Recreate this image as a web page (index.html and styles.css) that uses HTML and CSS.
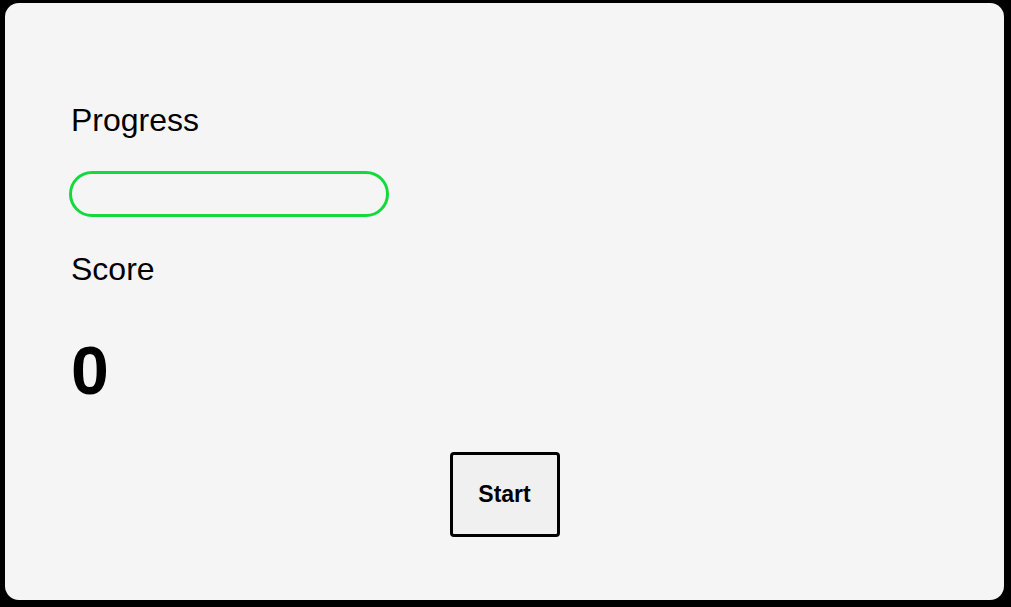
FILE: index.html
```html
<!DOCTYPE html>
<html lang="en">
<head>
<meta charset="utf-8">
<title>Progress</title>
<link rel="stylesheet" href="styles.css">
</head>
<body>
  <main class="card">
    <div class="label label-progress">Progress</div>
    <div class="bar"><div class="bar-fill" style="width:0%"></div></div>
    <div class="label label-score">Score</div>
    <div class="score">0</div>
    <div class="actions">
      <button class="start" type="button">Start</button>
    </div>
  </main>
</body>
</html>
```
FILE: styles.css
```css
html, body {
  margin: 0;
  height: 100%;
}
body {
  background: #000;
  box-sizing: border-box;
  padding: 3px 7px 7px 5px;
  display: flex;
  font-family: "Liberation Sans", Arial, sans-serif;
  color: #000;
}
.card {
  flex: 1;
  background: #f5f5f5;
  border-radius: 14px;
  padding: 99px 64px 0 64px;
  display: flex;
  flex-direction: column;
  align-items: flex-start;
}
.label {
  font-size: 32px;
  line-height: 37px;
  padding-left: 2px;
}
.bar {
  margin-top: 32px;
  width: 320px;
  height: 46px;
  box-sizing: border-box;
  border: 3px solid #14d93c;
  border-radius: 23px;
  overflow: hidden;
}
.bar-fill {
  height: 100%;
  background: #14d93c;
}
.label-score {
  margin-top: 34px;
}
.score {
  margin-top: 43px;
  font-size: 68px;
  font-weight: 700;
  line-height: 78px;
  padding-left: 2px;
}
.actions {
  align-self: stretch;
  display: flex;
  justify-content: center;
  margin-top: 43px;
}
.start {
  width: 110px;
  height: 85px;
  box-sizing: border-box;
  border: 3px solid #000;
  border-radius: 4px;
  background: #f0f0f0;
  font-family: "Liberation Sans", Arial, sans-serif;
  font-size: 23px;
  font-weight: 700;
  color: #000;
  padding: 0;
}
```
